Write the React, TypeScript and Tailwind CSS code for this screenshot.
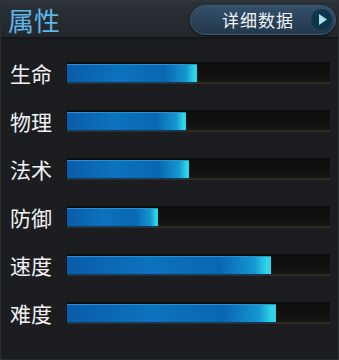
import React from "react";

const stats = [
  { name: "生命", value: 130 },
  { name: "物理", value: 119 },
  { name: "法术", value: 122 },
  { name: "防御", value: 91 },
  { name: "速度", value: 204 },
  { name: "难度", value: 209 },
];

function StatBar({ name, value }: { name: string; value: number }) {
  return (
    <div className="flex items-center h-[23px]">
      <span className="w-[56px] text-[21px] leading-none text-[#f2f2f2]">{name}</span>
      <div className="relative w-[264px] h-[23px] bg-[linear-gradient(to_bottom,#0c0c0b_0%,#131210_60%,#1a1814_85%,#3a342c_92%,#15130f_100%)] border-l border-[#10161c]">
        <div
          className="absolute left-0 top-[2px] h-[19px] bg-[linear-gradient(to_right,#0a5ca8_0%,#0c72bf_40%,#0a66b2_75%,#1598d0_92%,#30d6e8_98%,#30d6e8_100%)] shadow-[inset_0_1px_0_#2b8fd0,inset_0_-1px_0_#083c70]"
          style={{ width: value }}
        />
      </div>
    </div>
  );
}

export default function App() {
  return (
    <div className="w-[339px] h-[360px] bg-[#1b1d21] border-l border-r border-b border-[#2a2e33] font-['Noto_Sans_CJK_SC',sans-serif] overflow-hidden">
      {/* 标题栏 */}
      <div className="h-[39px] flex items-center justify-between pl-[7px] pr-[2px] bg-[linear-gradient(to_bottom,#2c3137,#23272c)] border-t-2 border-[#2f353c] border-b-2 border-b-[#141619]">
        <span className="text-[26px] leading-none text-[#5cb6e8]">属性</span>
        <button className="flex items-center h-[30px] w-[146px] rounded-full bg-[linear-gradient(to_bottom,#34506a,#22384c)] border border-[#3d5a72] pl-[31px] pr-[3px] shadow-[0_1px_2px_#0a0c0e]">
          <span className="text-[17px] leading-none text-[#f0f4f8] tracking-[1px]">详细数据</span>
          <span className="ml-auto w-[21px] h-[21px] rounded-full bg-[#0c374b] flex items-center justify-center">
            <svg width="8" height="11" viewBox="0 0 8 11" className="ml-[2px]">
              <polygon points="0,0 8,5.5 0,11" fill="#b0dcf2" />
            </svg>
          </span>
        </button>
      </div>

      {/* 属性条 */}
      <div className="flex flex-col gap-[25px] pt-[23px] pl-[9px]">
        {stats.map((s) => (
          <StatBar key={s.name} name={s.name} value={s.value} />
        ))}
      </div>
    </div>
  );
}
